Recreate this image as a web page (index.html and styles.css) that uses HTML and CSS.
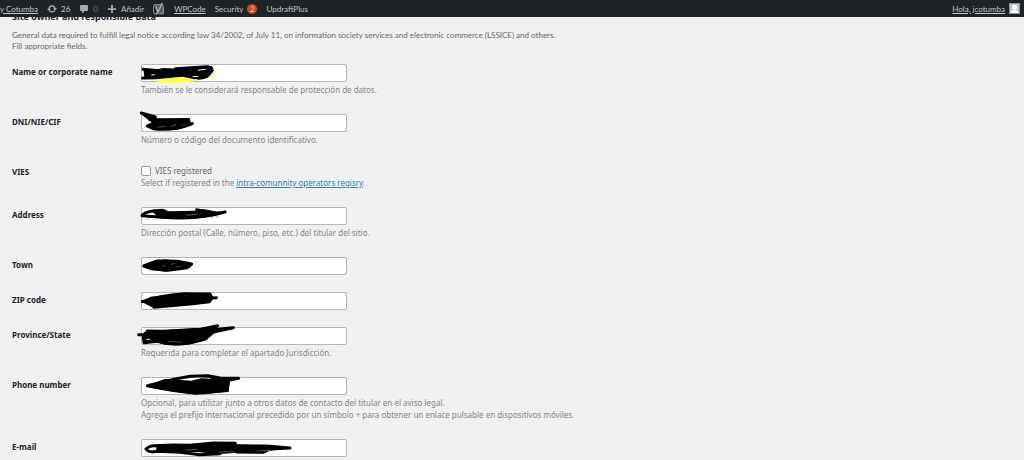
FILE: index.html
```
<!DOCTYPE html>
<html lang="es">
  <head>
    <meta charset="utf-8">
    <meta name="viewport" content="width=device-width, initial-scale=1">
    <title>Site owner and responsible data</title>
    <link rel="stylesheet" href="styles.css">
  </head>

  <body>
    <nav class="adminbar">
      <a class="adminbar__item adminbar__item--site" href="#">y Cotumba</a>
      <a class="adminbar__item" href="#">
        <svg class="icon" viewBox="0 0 20 20">
          <path d="M4 8a6.500 6.500 0 0 1 12 0M16 12a6.500 6.500 0 0 1-12 0" fill="none" stroke="currentColor" stroke-width="2.600"/>
          <path d="M0 12h8L4 7zM12 8h8l-4 5z" fill="currentColor"/>
        </svg>
        26
      </a>
      <a class="adminbar__item" href="#">
        <svg class="icon" viewBox="0 0 20 20">
          <path d="M4 2h12a2 2 0 0 1 2 2v8a2 2 0 0 1-2 2h-5l-5 5v-5H4a2 2 0 0 1-2-2V4a2 2 0 0 1 2-2z" fill="currentColor"/>
        </svg>
        <span class="adminbar__zero">0</span>
      </a>
      <a class="adminbar__item" href="#">
        <svg class="icon" viewBox="0 0 20 20">
          <path d="M10 2v16M2 10h16" stroke="currentColor" stroke-width="3.500"/>
        </svg>
        Añadir
      </a>
      <a class="adminbar__item" href="#" aria-label="SEO">
        <svg class="icon icon--seo" viewBox="0 0 22 22">
          <path d="M4 3h11L9 17 5 7H2V5a2 2 0 0 1 2-2zM19 5v15H9l3-3 5-12z" fill="currentColor" opacity=".45"/>
          <path d="M19 20V6q0-2-2-3M14 3H4Q1 3 1 6v11q0 3 3 3h1M10 20h9" fill="none" stroke="currentColor" stroke-width="1.500"/>
          <path d="M5 7l4 9M17 0l-7 16q-2 4-5 4" fill="none" stroke="currentColor" stroke-width="3"/>
        </svg>
      </a>
      <a class="adminbar__item adminbar__item--code" href="#">WPCode</a>
      <a class="adminbar__item" href="#">Security <span class="badge">2</span></a>
      <a class="adminbar__item" href="#">UpdraftPlus</a>
      <a class="adminbar__item adminbar__item--user" href="#">
        <span>Hola, jcotumba</span>
        <svg class="avatar" viewBox="0 0 11 11">
          <path d="M0 0h11v11H0z" fill="#c5c5c5"/>
          <circle cx="5.500" cy="4.200" r="2.500" fill="#fff"/>
          <path d="M1.500 11q0-4 4-4t4 4z" fill="#fff"/>
          <path d="M.5.5h10v10H.5z" fill="none" stroke="#8c8f94"/>
        </svg>
      </a>
    </nav>

    <main class="content">
      <h2 class="section-title">Site owner and responsible data</h2>
      <p class="intro">
        General data required to fulfill legal notice according law 34/2002, of July 11, on information society services and electronic commerce (LSSICE) and others.<br>
        Fill appropriate fields.
      </p>

      <form>
        <table class="form-table">
          <tr>
            <th><label for="name">Name or corporate name</label></th>
            <td>
              <div class="field">
                <input class="field__input" type="text" id="name">
                <svg class="scribble" viewBox="15 -6 510 90">
                  <path d="M50 48q44 14 94 11 60-2 106-20" fill="none" stroke="#ffff42" stroke-width="17"/>
                  <path d="M40 28l45-1 16-3 40 2 50-6 55-2 6 14-20 22-38 4-36-8-44 4-70 4z"/>
                  <path class="gap" d="M204 31l24-4M64 45l10-1M188 50l16-1"/>
                  <path class="pen" d="M39 28l50 4M38 54q80 0 130-17M136 26l96-6q18 3 10 14-10 20-37 21"/>
                </svg>
              </div>
              <p class="description">También se le considerará responsable de protección de datos.</p>
            </td>
          </tr>
          <tr>
            <th><label for="dni">DNI/NIE/CIF</label></th>
            <td>
              <div class="field">
                <input class="field__input" type="text" id="dni">
                <svg class="scribble" viewBox="15 144 510 90">
                  <path d="M45 165l36 10 98-1 5 21-42 15-80-2-12-12 15-8z"/>
                  <path class="gap gap--thin" d="M82 202l24-3M122 201l17-8M152 196l24-4"/>
                  <path class="pen" d="M34 159l42 12-18 7 24 6-30 14 18 8q60 8 117-15M35 159l38 28 100-8"/>
                </svg>
              </div>
              <p class="description">Número o código del documento identificativo.</p>
            </td>
          </tr>
          <tr>
            <th>VIES</th>
            <td>
              <label class="check"><input class="check__box" type="checkbox">VIES registered</label>
              <p class="description description--check">Select if registered in the <a class="link" href="#">intra-comunnity operators regisry</a>.</p>
            </td>
          </tr>
          <tr>
            <th><label for="address">Address</label></th>
            <td>
              <div class="field">
                <input class="field__input" type="text" id="address">
                <svg class="scribble" viewBox="15 3 510 90">
                  <path d="M68 36l12-4 24-4 10 6 80-2 30-4 30 6 38 2-34 12-60 7H88z"/>
                  <path class="gap gap--thin" d="M168 46l36-4"/>
                  <path class="pen" d="M37 45q12-13 60-14M36 47l60 5q80 5 134-4l55-12M200 29l35 7"/>
                  <path class="rest" d="M50 57h8M76 57l4 2M242 52l8 0M264 47q-5-4-6 1 2 6 8 3"/>
                </svg>
              </div>
              <p class="description">Dirección postal (Calle, número, piso, etc.) del titular del sitio.</p>
            </td>
          </tr>
          <tr>
            <th><label for="town">Town</label></th>
            <td>
              <div class="field">
                <input class="field__input" type="text" id="town">
                <svg class="scribble" viewBox="15 153 510 90">
                  <path d="M43 197l20-12 42-7 42 4 38 9-5 13-28 4-48 7-38-7z"/>
                  <path class="gap gap--thin" d="M98 198l8-2M122 194l13-5M136 202l14-3"/>
                  <path class="pen" d="M42 197l40-14 60 1 43 8-14 11-28 4-30 4-50-5-22-8"/>
                </svg>
              </div>
            </td>
          </tr>
          <tr>
            <th><label for="zip">ZIP code</label></th>
            <td>
              <div class="field">
                <input class="field__input" type="text" id="zip">
                <svg class="scribble" viewBox="15 3 510 90">
                  <path d="M38 49l24-14 100-11 80 2 6 12-8 15-66 6-64 3-40 7-30-16z"/>
                  <path class="gap gap--thin" d="M164 32l7-2M98 62l12-2"/>
                  <path class="pen" d="M37 50q50-18 125-24l78 1 6 13-8 10-50 6-116 11M222 41l37-3"/>
                </svg>
              </div>
            </td>
          </tr>
          <tr>
            <th><label for="province">Province/State</label></th>
            <td>
              <div class="field">
                <input class="field__input" type="text" id="province">
                <svg class="scribble" viewBox="15 108 510 90">
                  <path d="M40 143l14-8 46 1 110-7 54-8-6 20-32 26-60 13-60-1-34-9-28 3z"/>
                  <path class="gap" d="M50 163h10"/>
                  <path class="gap gap--thin" d="M116 170l42 2M192 168l30-10"/>
                  <path class="pen" d="M26 149h25M52 138l45 1 116-6 50-11M253 140l57-12-62 6-20 26q-80 30-146 9l-40 4-2-16"/>
                </svg>
              </div>
              <p class="description">Requerida para completar el apartado Jurisdicción.</p>
            </td>
          </tr>
          <tr>
            <th><label for="phone">Phone number</label></th>
            <td>
              <div class="field">
                <input class="field__input" type="text" id="phone">
                <svg class="scribble" viewBox="15 18 510 90">
                  <path d="M50 62l54-20 80 5 48-12 68 8-4 38-50 3-52 4-56-7-60-10z"/>
                  <path class="gap" d="M174 43q32-10 67-3"/>
                  <path class="pen" d="M52 62l84-20 45-8 53-2 36 7 56 1-30 6-6 30-50 6-44 3-70-9z"/>
                </svg>
              </div>
              <p class="description">
                Opcional, para utilizar junto a otros datos de contacto del titular en el aviso legal.<br>
                Agrega el prefijo internacional precedido por un símbolo + para obtener un enlace pulsable en dispositivos móviles.
              </p>
            </td>
          </tr>
          <tr>
            <th><label for="email">E-mail</label></th>
            <td>
              <div class="field">
                <input class="field__input" type="text" id="email">
                <svg class="scribble" viewBox="15 204 510 90">
                  <path d="M78 242l50-2 52-3 100-4 40 5 100 3 40 6-30 9-80 5-88 7-60-7-122-1z"/>
                  <path class="pen" d="M48 252q10-11 28-10l54-2 50 1 70-7 66 1M50 254q8 10 30 5l70 3 60 7 60-3M320 243l90 0 70 6-60 3-20 10-80-1"/>
                  <path class="gap gap--thin" d="M166 255l36-2M268 262q26-4 46-1M380 258l40-2"/>
                </svg>
              </div>
            </td>
          </tr>
        </table>
      </form>
    </main>
  </body>
</html>
```

FILE: styles.css
```
:root {
  --bar: #1d2327;
  --bar-text: #c3c4c7;
  --page: #f0f0f0;
  --heading: #1d2327;
  --text: #646970;
  --muted: #82868c;
  --border: #b4b6b9;
  --link: #2f7fb8;
  --badge: #ca4a1f;
}

body {
  margin: 0;
  background: var(--page);
  color: var(--text);
  font-family: 'Noto Sans', sans-serif;
  font-size: 8px;
  line-height: 12px;
  overflow: hidden;
}

.adminbar {
  position: fixed;
  top: 0;
  left: 0;
  right: 0;
  z-index: 1;
  display: flex;
  align-items: center;
  height: 17px;
  padding-right: 4px;
  background: var(--bar);
  white-space: nowrap;
}

.adminbar__item {
  display: flex;
  align-items: center;
  gap: 4px;
  margin-right: 9px;
  color: var(--bar-text);
  font-family: Lato, sans-serif;
  line-height: 10px;
  text-decoration: none;
}

.adminbar__item--site,
.adminbar__item--code,
.adminbar__item--user span {
  text-decoration: underline;
}

.adminbar__item--user {
  margin-left: auto;
  margin-right: 0;
}

.adminbar__zero {
  color: #6c7075;
}

.icon {
  width: 10px;
  height: 10px;
  color: #a7aaad;
}

.icon--seo {
  width: 12px;
  height: 12px;
}

.badge {
  width: 10px;
  height: 10px;
  border-radius: 5px;
  background: var(--badge);
  color: #e8c5b8;
  text-align: center;
}

.avatar {
  width: 11px;
  height: 11px;
}

.content {
  padding: 10px 12px 0;
}

.section-title {
  margin: 0 0 6px;
  color: var(--heading);
  font-size: 9px;
  line-height: 14px;
}

.intro {
  margin: 0 0 3px;
  font-family: Lato, sans-serif;
  line-height: 11px;
}

.form-table {
  width: 100%;
  border-collapse: collapse;
}

.form-table th {
  width: 129px;
  padding: 11px 0 0;
  color: var(--heading);
  font-weight: bold;
  text-align: left;
  vertical-align: top;
}

.form-table td {
  padding: 9px 0 8px;
  vertical-align: top;
}

.field {
  position: relative;
  width: 206px;
}

.field__input {
  display: block;
  box-sizing: border-box;
  width: 100%;
  height: 18px;
  padding: 0 4px;
  border: 1px solid var(--border);
  border-radius: 2px;
  background: #fff;
  font: inherit;
}

.scribble {
  position: absolute;
  top: -6px;
  left: -6px;
  width: 170px;
  height: 30px;
  pointer-events: none;
}

.scribble .pen {
  fill: none;
  stroke: #000;
  stroke-width: 9;
  stroke-linecap: round;
  stroke-linejoin: round;
}

.scribble .gap {
  fill: none;
  stroke: #fff;
  stroke-width: 3;
}

.scribble .gap--thin {
  stroke-width: 1;
}

.scribble .rest {
  fill: none;
  stroke: #777;
  stroke-width: 2;
}

.description {
  margin: 2px 0 1px;
  color: var(--muted);
}

.description--check {
  margin: 0 0 1px;
}

.check {
  display: flex;
  align-items: center;
  gap: 4px;
  height: 13px;
}

.check__box {
  appearance: none;
  width: 10px;
  height: 10px;
  margin: 0;
  border: 1px solid #999ca1;
  border-radius: 2px;
  background: #fff;
}

.link {
  color: var(--link);
}
```
